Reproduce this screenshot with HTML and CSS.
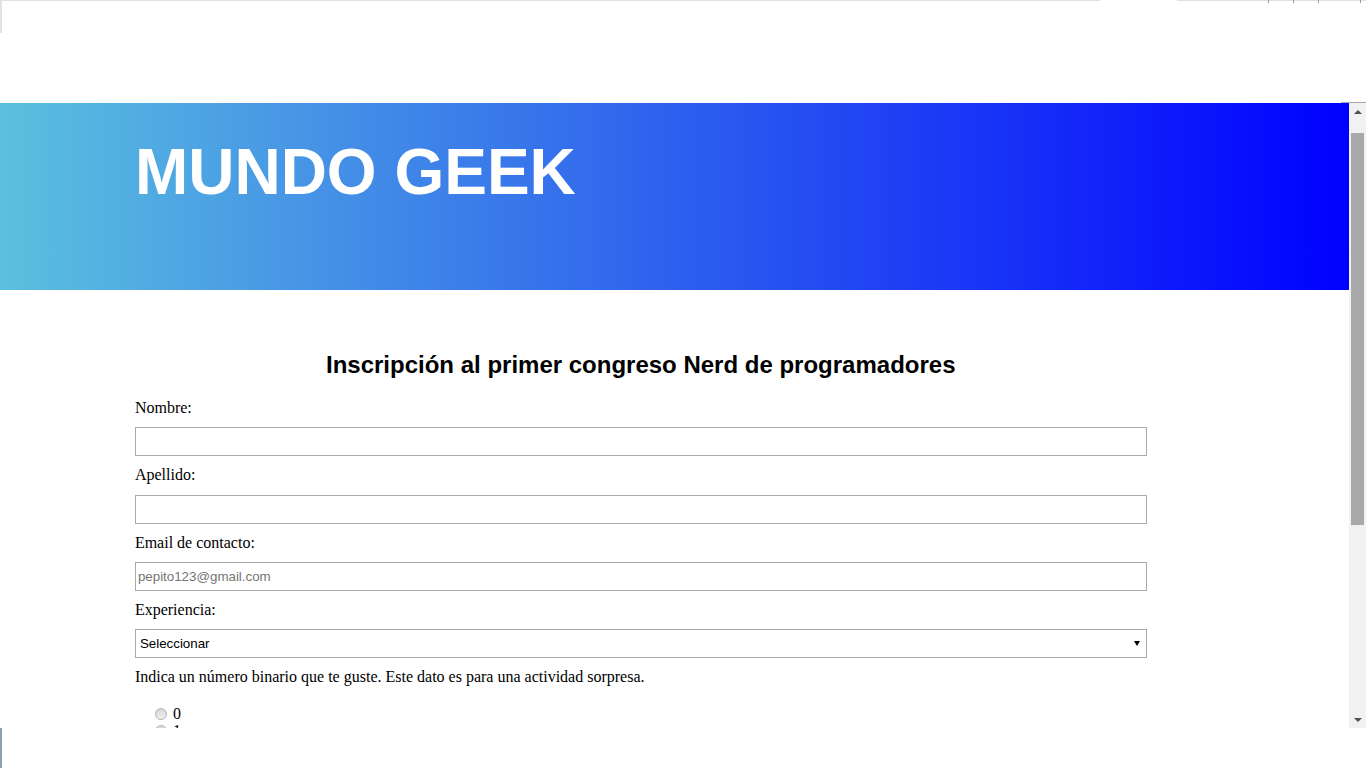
FILE: index.html
```html
<!DOCTYPE html>
<html lang="es">
<head>
<meta charset="utf-8">
<title>Mundo Geek</title>
<link rel="stylesheet" href="styles.css">
</head>
<body>
<div class="top-chrome">
  <div class="tabline">
    <span class="tl-a"></span>
    <span class="tl-gap"></span>
    <span class="tl-b"><i class="tick t1"></i><i class="tick"></i><i class="tick"></i><i class="tick t4"></i></span>
  </div>
  <div class="edge-top"></div>
  <div class="corner-line"></div>
</div>
<div class="viewport">
  <div class="page">
    <header class="banner">
      <h1 class="brand">MUNDO GEEK</h1>
    </header>
    <main class="form-wrap">
      <h2 class="form-title">Inscripción al primer congreso Nerd de programadores</h2>
      <form class="form">
        <label class="field-label" for="nombre">Nombre:</label>
        <input class="field" id="nombre" type="text">
        <label class="field-label" for="apellido">Apellido:</label>
        <input class="field" id="apellido" type="text">
        <label class="field-label" for="email">Email de contacto:</label>
        <input class="field" id="email" type="email" placeholder="pepito123@gmail.com">
        <label class="field-label" for="exp">Experiencia:</label>
        <div class="select-wrap">
          <select class="field select" id="exp"><option>Seleccionar</option></select>
          <span class="select-arrow"></span>
        </div>
        <p class="question">Indica un número binario que te guste. Este dato es para una actividad sorpresa.</p>
        <div class="radios">
          <label class="radio-row"><input class="radio" type="radio" name="bin"><span>0</span></label>
          <label class="radio-row"><input class="radio" type="radio" name="bin"><span>1</span></label>
        </div>
      </form>
    </main>
  </div>
  <div class="scrollbar">
    <div class="sb-btn"><svg class="sb-icon" width="8" height="4" viewBox="0 0 8 4"><path d="M0 4 L4 0 L8 4 Z" fill="#505050"/></svg></div>
    <div class="sb-track"><div class="sb-thumb"></div></div>
    <div class="sb-btn"><svg class="sb-icon" width="8" height="4" viewBox="0 0 8 4"><path d="M0 0 L8 0 L4 4 Z" fill="#505050"/></svg></div>
  </div>
</div>
<div class="bottom-chrome"><div class="edge-bottom"></div></div>
</body>
</html>
```

FILE: styles.css
```css
* { box-sizing: border-box; }

html, body {
  margin: 0;
  padding: 0;
  background: #fff;
  overflow: hidden;
}

body {
  font-family: "Liberation Serif", "Times New Roman", serif;
  font-size: 16px;
  color: #000;
  width: 1366px;
  height: 768px;
}

/* browser chrome imitation */
.top-chrome {
  height: 103px;
  display: flex;
  flex-direction: column;
  background: #fff;
}

.tabline {
  display: flex;
  height: 1px;
}

.tl-a {
  width: 1100px;
  background: #dfe1e5;
}

.tl-gap {
  width: 77px;
}

.tl-b {
  flex: 1;
  display: flex;
  background: #dfe1e5;
  align-items: flex-start;
}

.tick {
  width: 25px;
  height: 3px;
  border-right: 1px solid #9a9a9a;
}

.tick.t1 { width: 92px; }
.tick.t4 { width: 42px; }

.edge-top {
  width: 2px;
  height: 32px;
  background: #dfe2e6;
}

.corner-line {
  margin-top: auto;
  align-self: flex-end;
  width: 25px;
  height: 1px;
  background: #a8a8a8;
}

.viewport {
  display: flex;
  height: 625px;
}

.page {
  flex: 1;
  overflow: hidden;
  background: #fff;
}

.bottom-chrome {
  height: 40px;
  background: #fff;
}

.edge-bottom {
  width: 2px;
  height: 40px;
  background: #8d9db6;
}

/* scrollbar */
.scrollbar {
  width: 17px;
  flex-shrink: 0;
  background: #f1f1f1;
  display: flex;
  flex-direction: column;
}

.sb-btn {
  height: 17px;
  flex-shrink: 0;
  display: flex;
  align-items: center;
  justify-content: center;
}

.sb-icon {
  display: block;
}

.sb-track {
  flex: 1;
  padding: 13px 2px 0;
}

.sb-thumb {
  height: 392px;
  background: #a8a8a8;
}

/* page content */
.banner {
  height: 187px;
  padding: 32px 0 0 10%;
  background: linear-gradient(to right, #5bc0de, #0000ff);
}

.brand {
  margin: 0;
  font-family: "Liberation Sans", Arial, sans-serif;
  font-size: 64px;
  font-weight: bold;
  color: #fff;
  line-height: normal;
}

.form-wrap {
  display: block;
  margin-left: 10%;
  width: 75%;
  padding-top: 61px;
}

.form-title {
  margin: 0 0 20px;
  font-family: "Liberation Sans", Arial, sans-serif;
  font-size: 24px;
  font-weight: bold;
  text-align: center;
  line-height: normal;
}

.field-label {
  display: block;
  line-height: 18.33px;
}

.field {
  display: block;
  width: 100%;
  height: 29px;
  margin: 10px 0;
  padding: 1px 2px;
  border: 1px solid #a9a9a9;
  border-radius: 0;
  background: #fff;
  font-family: "Liberation Sans", Arial, sans-serif;
  font-size: 13.33px;
  color: #000;
  outline: none;
}

.field::placeholder {
  color: #757575;
}

.select-wrap {
  position: relative;
  margin: 10px 0;
}

.select {
  margin: 0;
  padding-left: 4px;
  -webkit-appearance: none;
  appearance: none;
}

.select-arrow {
  position: absolute;
  right: 7px;
  top: 12px;
  width: 0;
  height: 0;
  border-left: 3.5px solid transparent;
  border-right: 3.5px solid transparent;
  border-top: 5px solid #000;
  pointer-events: none;
}

.question {
  margin: 0;
  line-height: 18.33px;
}

.radios {
  margin-top: 18px;
  padding-left: 20px;
}

.radio-row {
  display: flex;
  align-items: flex-start;
  height: 17px;
  line-height: 17px;
}

.radio {
  -webkit-appearance: none;
  appearance: none;
  width: 12px;
  height: 12px;
  margin: 3px 6px 0 0;
  border: 1px solid #b3b3b3;
  border-radius: 50%;
  background: linear-gradient(#d6d6d6, #f0f0f0);
}
```
